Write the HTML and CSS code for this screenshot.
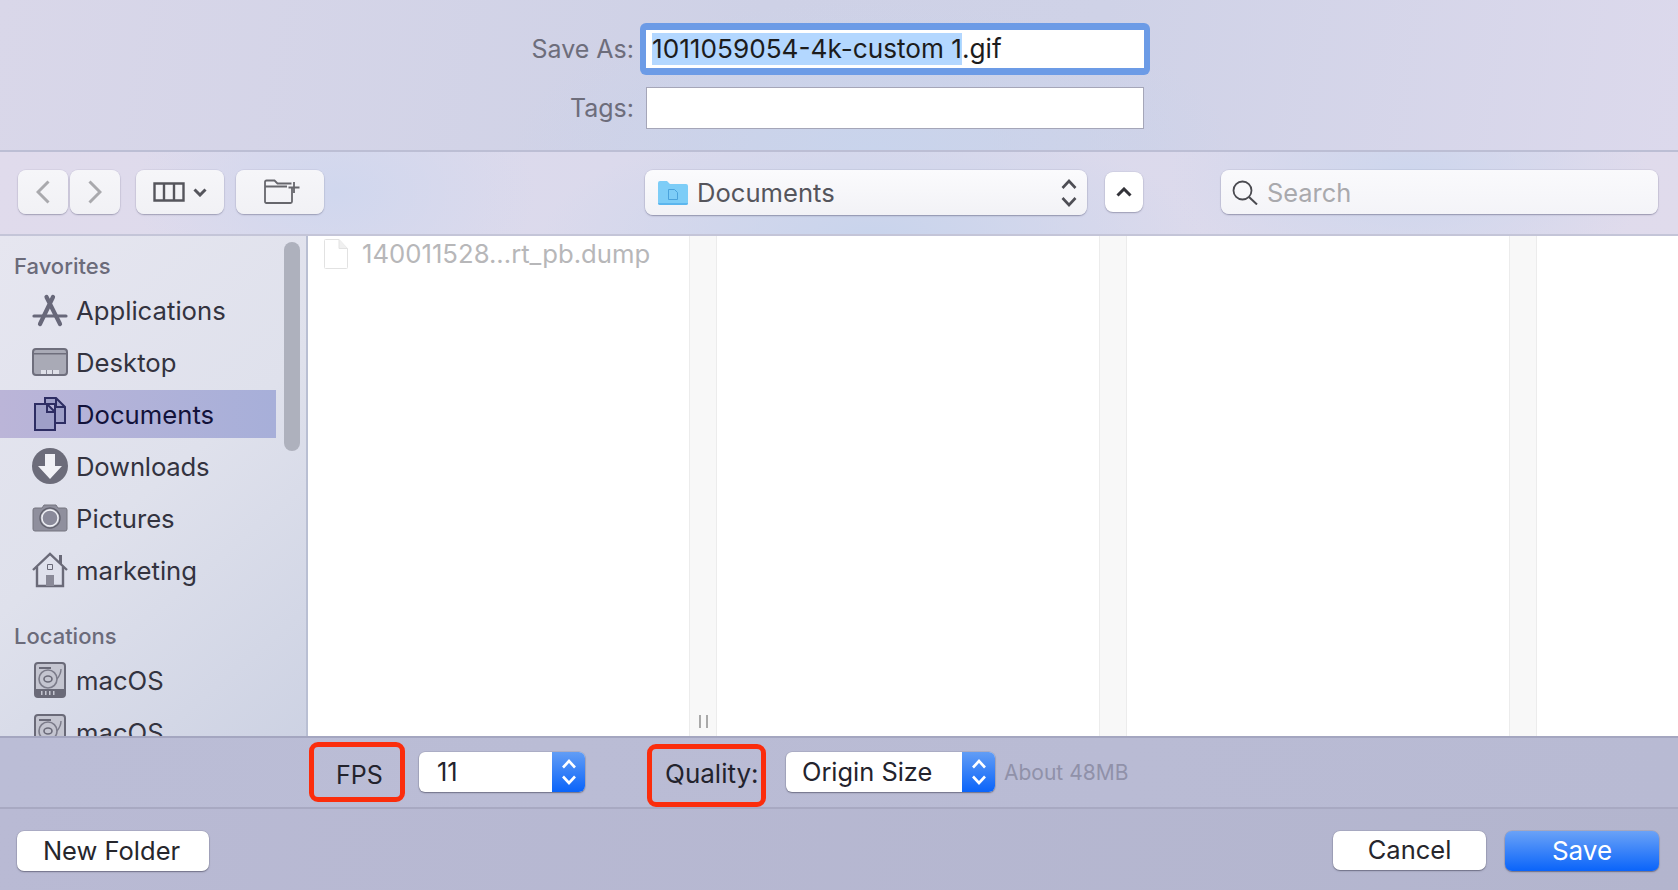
FILE: index.html
```html
<!DOCTYPE html>
<html lang="en">
<head>
<meta charset="utf-8">
<title>Save As</title>
<link rel="stylesheet" href="styles.css">
</head>
<body>
<div class="dialog">
  <header class="names">
    <div class="name-row first">
      <span class="name-label">Save As:</span>
      <div class="name-ring"><div class="name-field"><span class="sel">1011059054-4k-custom 1</span>.gif</div></div>
    </div>
    <div class="name-row second">
      <span class="name-label">Tags:</span>
      <div class="tags-field"></div>
    </div>
  </header>

  <div class="toolbar">
    <div class="tb-left">
      <div class="btn nav"><svg width="14" height="24" viewBox="0 0 14 24"><path class="chev-dim" d="M12.5 1.5 2 12l10.5 10.5"/></svg></div>
      <div class="btn nav next"><svg width="14" height="24" viewBox="0 0 14 24"><path class="chev-dim" d="M1.5 1.5 12 12 1.5 22.5"/></svg></div>
      <div class="btn wide view">
        <svg width="32" height="20" viewBox="0 0 32 20"><path class="ico-line" d="M1.5 1.5h29v17h-29zM11 1.5v17M21 1.5v17"/></svg>
        <svg width="14" height="9" viewBox="0 0 14 9"><path class="ico-thick" d="M1.5 1.5 7 7l5.5-5.5"/></svg>
      </div>
      <div class="btn wide folder">
        <svg width="36" height="26" viewBox="0 0 36 26"><path class="ico-thin" d="M1 8V3q0-1.500 1.500-1.500h8l3 3h14M28 9v13.500q0 1.500-1.500 1.500h-24Q1 24 1 22.500V7.500h22M30 3v11M24.500 8.500h11"/></svg>
      </div>
    </div>
    <div class="path-pop">
      <svg class="blue-folder" width="30" height="25" viewBox="0 0 30 25"><path fill="#7dcdf7" d="M0 3q0-2 2-2h7l3 3h16q2 0 2 2v17q0 2-2 2H2q-2 0-2-2z"/><path fill="#5cb6ee" d="M0 23h30q0 2-2 2H2q-2 0-2-2z"/><path fill="none" stroke="#4aa3dc" d="M10.500 9.500h6l3 3v7h-9z"/></svg>
      <span class="path-text">Documents</span>
      <svg class="updown" width="16" height="28" viewBox="0 0 16 28"><path class="ico-pop" d="M1.500 9 8 2l6.500 7M1.500 19 8 26l6.500-7"/></svg>
    </div>
    <div class="btn up"><svg width="16" height="10" viewBox="0 0 16 10"><path class="ico-up" d="M1.500 8.500 8 2l6.500 6.500"/></svg></div>
    <div class="search">
      <svg width="26" height="25" viewBox="0 0 26 25"><circle cx="10.500" cy="10.500" r="9" fill="none" stroke="#4a4a50" stroke-width="1.800"/><path stroke="#4a4a50" stroke-width="2" d="m17 17 8 7.500"/></svg>
      <span class="search-text">Search</span>
    </div>
  </div>

  <main class="browser">
    <aside class="sidebar">
      <div class="sec first-sec">Favorites</div>
      <div class="row">
        <svg class="ri" width="36" height="36" viewBox="0 0 36 36"><g fill="none" stroke="#68687a" stroke-width="4.200" stroke-linecap="round"><path d="M21 5 8 32M14.500 5 28 32"/><path stroke-width="3.200" d="M2 24h32"/></g></svg>
        <span>Applications</span>
      </div>
      <div class="row">
        <svg class="ri" width="36" height="36" viewBox="0 0 36 36"><rect x="1" y="5" width="34" height="26" rx="3" fill="#a9aab6" stroke="#6e6e7c" stroke-width="2"/><path fill="#6e6e7c" d="M2 9h32v1.500H2z"/><path fill="#dfe0e8" d="M9 26h18v4H9z"/><path fill="#8a8a98" d="M14 26h1v4h-1zM20 26h1v4h-1z"/></svg>
        <span>Desktop</span>
      </div>
      <div class="row active">
        <svg class="ri" width="36" height="36" viewBox="0 0 36 36"><g stroke="#2d2d63" stroke-width="2" fill="#9e9fc8"><path d="M13 8V2h11l9 9v16H23V8z"/><path fill="none" d="M24 2v9h9"/><path d="M3 8h12l8 8v18H3z"/><path fill="none" d="M15 8v8h8"/></g></svg>
        <span>Documents</span>
      </div>
      <div class="row">
        <svg class="ri" width="36" height="36" viewBox="0 0 36 36"><circle cx="18" cy="18" r="18" fill="#6c6c7a"/><path fill="#f1f1f6" d="M13 6h10v12h7L18 31 6 18h7z"/></svg>
        <span class="tight">Downloads</span>
      </div>
      <div class="row">
        <svg class="ri" width="36" height="36" viewBox="0 0 36 36"><path fill="#8f8f9d" stroke="#74747f" d="M1 10q0-2 2-2h7l2-3h12l2 3h7q2 0 2 2v19q0 2-2 2H3q-2 0-2-2z"/><circle cx="18" cy="18" r="10" fill="#b9bac6" stroke="#62626e" stroke-width="1.400"/><circle cx="18" cy="18" r="8" fill="#8a8a9a" stroke="#f2f3f7" stroke-width="1.300"/></svg>
        <span>Pictures</span>
      </div>
      <div class="row">
        <svg class="ri" width="36" height="36" viewBox="0 0 36 36"><path fill="none" stroke="#6a6a78" stroke-width="2.400" d="M1 18 18 2l17 16M5 15v19h26V15"/><path fill="#6a6a78" d="M27 3h3v9h-3z"/><path fill="#8a8a98" d="M14 23h8v11h-8z"/><path fill="none" stroke="#6a6a78" d="M15.500 12.500h5v5h-5z"/></svg>
        <span>marketing</span>
      </div>
      <div class="sec">Locations</div>
      <div class="row">
        <svg class="ri" width="36" height="36" viewBox="0 0 36 36"><use href="#disk"/></svg>
        <span>macOS</span>
      </div>
      <div class="row">
        <svg class="ri" width="36" height="36" viewBox="0 0 36 36"><defs><g id="disk"><rect x="3" y="1" width="30" height="34" rx="3" fill="#c4c5d0" stroke="#6a6a78" stroke-width="2"/><path fill="#6a6a78" d="M7 5h12v2H7zM4 27h28v8H4z"/><path fill="#c4c5d0" d="M9 29h1.500v4H9zM13 29h1.500v4H13zM17 29h1.500v4H17zM21 29h1.500v4H21z"/><circle cx="16" cy="17" r="9" fill="none" stroke="#7c7c8a" stroke-width="1.600"/><ellipse cx="16" cy="17" rx="4" ry="3" fill="none" stroke="#6a6a78" stroke-width="1.600"/><path fill="none" stroke="#7c7c8a" stroke-width="1.400" d="M25 17q4-5 4-10"/></g></defs><use href="#disk"/></svg>
        <span>macOS</span>
      </div>
      <div class="scrollbar"></div>
    </aside>
    <section class="columns">
      <div class="col col-a">
        <div class="file">
          <svg width="24" height="30" viewBox="0 0 24 30"><path fill="#fff" stroke="#e2e2e2" d="M.5 1.500q0-1 1-1H15l8.500 9v19q0 1-1 1h-21q-1 0-1-1z"/><path fill="#f0f0f0" stroke="#e2e2e2" d="M15 .5v9h8.500"/></svg>
          <span>140011528...rt_pb.dump</span>
        </div>
      </div>
      <div class="strip"><div class="grip"></div></div>
      <div class="col col-b"></div>
      <div class="strip"></div>
      <div class="col col-b"></div>
      <div class="strip"></div>
      <div class="col"></div>
    </section>
  </main>

  <div class="options">
    <div class="mark mark-fps">FPS</div>
    <div class="pop pop-fps"><span class="pop-val">11</span><div class="stepper"><svg width="16" height="28" viewBox="0 0 16 28"><path class="ico-step" d="M2 9.500 8 3l6 6.500M2 18.500 8 25l6-6.500"/></svg></div></div>
    <div class="mark mark-quality">Quality:</div>
    <div class="pop pop-size"><span class="pop-val">Origin Size</span><div class="stepper"><svg width="16" height="28" viewBox="0 0 16 28"><path class="ico-step" d="M2 9.500 8 3l6 6.500M2 18.500 8 25l6-6.500"/></svg></div></div>
    <span class="estimate">About 48MB</span>
  </div>

  <footer class="actions">
    <div class="push push-new">New Folder</div>
    <div class="spacer"></div>
    <div class="push push-cancel">Cancel</div>
    <div class="push push-save">Save</div>
  </footer>
</div>
</body>
</html>
```
FILE: styles.css
```css
* { box-sizing: border-box; }
html, body { margin: 0; height: 100%; }
body { font-family: Inter, "Liberation Sans", sans-serif; overflow: hidden; }

.dialog { width: 1678px; height: 890px; display: flex; flex-direction: column; background: #cfd2e6; }

.names {
  height: 152px;
  border-bottom: 2px solid #bcbed4;
  background:
    radial-gradient(ellipse 360px 150px at 52% 100%, #c9d4ec, rgba(201,212,236,0)),
    linear-gradient(100deg, #d9d7e9 0%, #ced1e6 45%, #cfd2e7 65%, #dcd9ec 100%);
}
.name-row { display: flex; align-items: center; }
.name-row.first { padding-top: 23px; height: 75px; }
.name-row.second { margin-top: 12px; height: 42px; }
.name-label { width: 634px; text-align: right; font-size: 25px; color: #6d6d7b; }
.name-ring { margin-left: 6px; width: 510px; height: 52px; padding: 7px 6px; background: #6c9be6; border-radius: 6px; }
.name-field { height: 38px; background: #fff; padding-left: 6px; font-size: 26.200px; line-height: 38px; color: #1c1c1c; white-space: nowrap; }
.sel { background: #b3d7ff; display: inline-block; height: 32px; line-height: 32px; vertical-align: top; margin-top: 3px; }
.tags-field { margin-left: 12px; width: 498px; height: 42px; background: #fff; border: 1px solid #a5a6b8; }

.toolbar {
  height: 84px;
  display: flex;
  align-items: flex-start;
  padding-top: 18px;
  border-bottom: 2px solid #c4c5d8;
  background:
    radial-gradient(ellipse 330px 110px at 52% 100%, #c9d4ec, rgba(201,212,236,0)),
    radial-gradient(ellipse 240px 120px at 84% 30%, #cdd6ed, rgba(205,214,237,0)),
    radial-gradient(ellipse 200px 120px at 20% 50%, #d0d7ee, rgba(208,215,238,0)),
    linear-gradient(100deg, #e0dbec 0%, #d9d9ec 50%, #e0dbec 100%);
}
.tb-left { display: flex; margin-left: 18px; width: 627px; }
.btn {
  display: flex; align-items: center; justify-content: center;
  height: 44px; border-radius: 8px;
  background: linear-gradient(#f6f6f9, #f1f1f5);
  box-shadow: 0 1px 1.500px rgba(90,90,120,.45), 0 0 0 .5px rgba(120,120,150,.15);
}
.nav { width: 50px; }
.nav.next { margin-left: 2px; }
.wide { width: 88px; }
.view { margin-left: 16px; gap: 8px; }
.folder { margin-left: 12px; }
.folder svg { margin-left: 4px; }
.chev-dim { fill: none; stroke: #a9a9ad; stroke-width: 3; }
.ico-line { fill: none; stroke: #55555c; stroke-width: 2.400; }
.ico-thick { fill: none; stroke: #55555c; stroke-width: 3; }
.ico-thin { fill: none; stroke: #66666c; stroke-width: 1.800; }
.ico-pop { fill: none; stroke: #4e4e55; stroke-width: 2.600; }
.ico-up { fill: none; stroke: #333339; stroke-width: 3; }
.ico-step { fill: none; stroke: #fff; stroke-width: 2.600; }

.path-pop {
  width: 442px; height: 45px;
  display: flex; align-items: center;
  padding: 0 10px 0 13px;
  border-radius: 8px;
  background: linear-gradient(#fbfbfd, #f2f2f6);
  box-shadow: 0 1px 1.500px rgba(90,90,120,.5), 0 0 0 .5px rgba(120,120,150,.2);
}
.path-text { margin-left: 9px; font-size: 25.600px; color: #55555c; flex: 1; }
.up { width: 38px; height: 40px; margin: 2px 0 0 18px; background: #fff; }
.search {
  margin-left: 78px; width: 437px; height: 44px;
  display: flex; align-items: center; padding-left: 11px;
  border-radius: 8px;
  background: linear-gradient(#fafafc, #f4f4f8);
  box-shadow: 0 1px 1.500px rgba(90,90,120,.5), 0 0 0 .5px rgba(120,120,150,.2);
}
.search-text { margin-left: 9px; font-size: 25.400px; color: #a9a9ad; }

.browser { height: 500px; display: flex; overflow: hidden; }
.sidebar {
  width: 308px; position: relative; overflow: hidden;
  border-right: 2px solid #b9bfd3;
  background: linear-gradient(140deg, #e6e6f0 0%, #dfe1ec 50%, #cdd2e3 100%);
}
.sec { font-size: 22px; font-weight: 500; color: #6b6b7a; line-height: 24px; padding: 26px 0 8px 14px; }
.first-sec { padding: 18px 0 8px 14px; }
.row {
  height: 48px; width: 276px; margin-bottom: 4px;
  display: flex; align-items: center; padding-left: 32px;
  font-size: 25.700px; color: #33333f;
}
.row .ri { flex: none; margin-right: 8px; }
.row .tight { letter-spacing: -.2px; }
.row.active { background: linear-gradient(90deg, #bbb5d8, #a7afd9); color: #12123a; }
.scrollbar { position: absolute; left: 284px; top: 6px; width: 16px; height: 209px; border-radius: 8px; background: #aeb1bd; }

.columns { flex: 1; display: flex; background: #fff; }
.col { flex: 1; }
.col-a { flex: none; width: 381px; padding: 2px 0 0 16px; }
.col-b { flex: none; width: 382px; }
.strip { flex: none; width: 28px; background: #f8f8f8; border-left: 1px solid #ececec; border-right: 1px solid #ececec; display: flex; align-items: flex-end; justify-content: center; }
.grip { width: 9px; height: 13px; margin-bottom: 8px; border-left: 2px solid #a9a9a9; border-right: 2px solid #a9a9a9; }
.file { display: flex; align-items: center; gap: 14px; font-size: 25.700px; color: #b7b7b9; white-space: nowrap; }

.options {
  height: 73px; display: flex; align-items: flex-start; padding-left: 309px;
  border-top: 2px solid #a4a6c0;
  border-bottom: 2px solid #a8a9c2;
  background: linear-gradient(90deg, #bbbdd6, #b8bad3);
}
.mark {
  border: 5px solid #fb2d0c; border-radius: 9px;
  font-size: 25px; color: #23232d;
  display: flex; align-items: center;
}
.mark-fps { width: 96px; height: 60px; margin-top: 4px; padding: 5px 0 0 22px; }
.mark-quality { width: 119px; height: 63px; margin: 6px 0 0 62px; padding: 0 0 5px 13px; font-size: 26px; white-space: nowrap; }
.pop {
  height: 40px; margin-top: 14px; border-radius: 6px;
  display: flex; background: #fff; overflow: hidden;
  box-shadow: 0 1px 1.500px rgba(70,70,90,.6), 0 0 0 .5px rgba(90,90,110,.25);
  font-size: 25.400px; color: #23232d;
}
.pop-val { flex: 1; line-height: 40px; padding-left: 16px; }
.pop-fps .pop-val { padding-left: 18px; }
.stepper { width: 33px; display: flex; align-items: center; justify-content: center; background: linear-gradient(#629df5, #0a64fa); }
.pop-fps { width: 166px; margin-left: 14px; }
.pop-size { width: 209px; margin-left: 20px; }
.estimate { margin: 22px 0 0 9px; font-size: 21px; line-height: 26px; color: #9091a9; white-space: nowrap; }

.actions {
  flex: 1; display: flex; align-items: flex-start; padding: 22px 19px 0 17px;
  background: linear-gradient(100deg, #b9bad4, #b3b5ce);
}
.spacer { flex: 1; }
.push {
  height: 40px; border-radius: 7px; background: #fff;
  box-shadow: 0 1px 1.500px rgba(70,70,90,.6), 0 0 0 .5px rgba(90,90,110,.25);
  display: flex; align-items: center; justify-content: center;
  padding-bottom: 2px;
  font-size: 25.500px; color: #26262c;
}
.push-new { width: 192px; padding-right: 3px; }
.push-cancel { width: 153px; height: 39px; }
.push-save { width: 154px; margin-left: 19px; color: #fff; background: linear-gradient(#6aa2f7, #0a64fa); font-size: 26px; }
```
